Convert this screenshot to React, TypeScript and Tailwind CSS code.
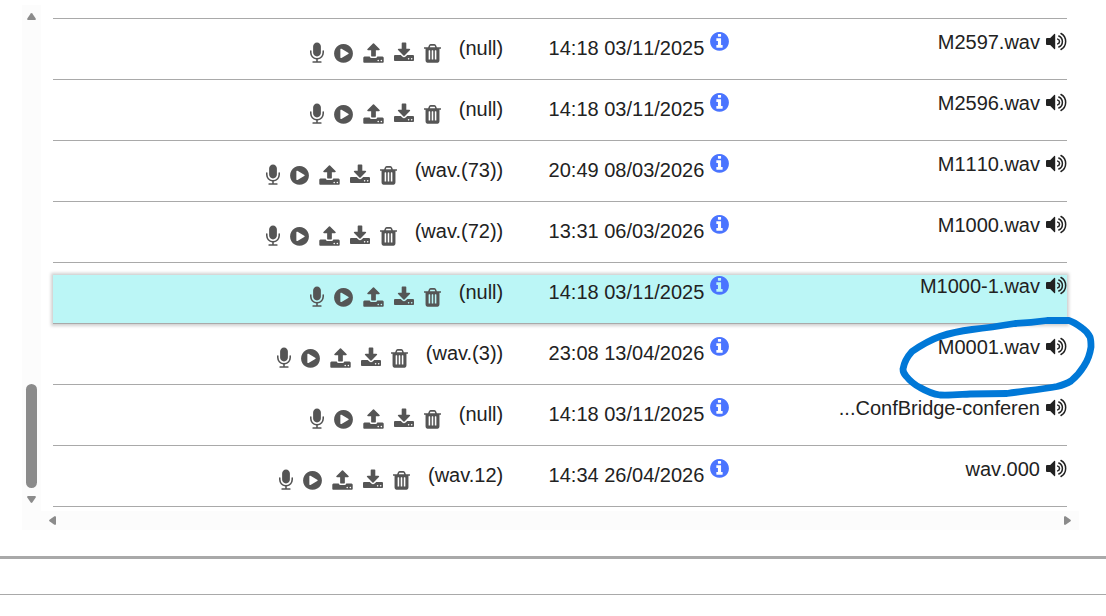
import type { ReactNode } from "react";

type IconProps = { box: string; className: string; d: string };

function Icon({ box, className, d }: IconProps) {
  return (
    <svg viewBox={box} className={className} fill="currentColor" aria-hidden="true">
      <path d={d} />
    </svg>
  );
}

const MIC =
  "M1472 704v128q0 221-147.5 384.5t-364.5 187.5v132h256q26 0 45 19t19 45-19 45-45 19h-640q-26 0-45-19t-19-45 19-45 45-19h256v-132q-217-24-364.5-187.5t-147.5-384.5v-128q0-26 19-45t45-19 45 19 19 45v128q0 185 131.5 316.5t316.5 131.5 316.5-131.5 131.5-316.5v-128q0-26 19-45t45-19 45 19 19 45zm-256-384v512q0 132-94 226t-226 94-226-94-94-226v-512q0-132 94-226t226-94 226 94 94 226z";
const PLAY =
  "M896 128q209 0 385.5 103t279.5 279.5 103 385.5-103 385.5-279.5 279.5-385.5 103-385.5-103-279.5-279.5-103-385.5 103-385.5 279.5-279.5 385.5-103zm384 823q32-18 32-55t-32-55l-544-320q-31-19-64-1-32 19-32 56v640q0 37 32 56 16 8 32 8 17 0 32-9z";
const UPLOAD =
  "M1344 1472q0-26-19-45t-45-19-45 19-19 45 19 45 45 19 45-19 19-45zm256 0q0-26-19-45t-45-19-45 19-19 45 19 45 45 19 45-19 19-45zm128-224v320q0 40-28 68t-68 28h-1472q-40 0-68-28t-28-68v-320q0-40 28-68t68-28h427q21 56 70.5 92t110.5 36h256q61 0 110.5-36t70.5-92h427q40 0 68 28t28 68zm-325-648q-17 40-59 40h-256v448q0 26-19 45t-45 19h-256q-26 0-45-19t-19-45v-448h-256q-42 0-59-40-17-39 14-69l448-448q18-19 45-19t45 19l448 448q31 30 14 69z";
const DOWNLOAD =
  "M1344 1344q0-26-19-45t-45-19-45 19-19 45 19 45 45 19 45-19 19-45zm256 0q0-26-19-45t-45-19-45 19-19 45 19 45 45 19 45-19 19-45zm128-224v320q0 40-28 68t-68 28h-1472q-40 0-68-28t-28-68v-320q0-40 28-68t68-28h465l135 136q58 56 136 56t136-56l136-136h464q40 0 68 28t28 68zm-325-569q17 41-14 70l-448 448q-18 19-45 19t-45-19l-448-448q-31-29-14-70 17-39 59-39h256v-448q0-26 19-45t45-19h256q26 0 45 19t19 45v448h256q42 0 59 39z";
const TRASH =
  "M704 1376v-704q0-14-9-23t-23-9h-64q-14 0-23 9t-9 23v704q0 14 9 23t23 9h64q14 0 23-9t9-23zm256 0v-704q0-14-9-23t-23-9h-64q-14 0-23 9t-9 23v704q0 14 9 23t23 9h64q14 0 23-9t9-23zm256 0v-704q0-14-9-23t-23-9h-64q-14 0-23 9t-9 23v704q0 14 9 23t23 9h64q14 0 23-9t9-23zm-544-992h448l-48-117q-7-9-17-11h-317q-10 2-17 11zm928 32v64q0 14-9 23t-23 9h-96v948q0 83-47 143.5t-113 60.5h-832q-66 0-113-58.5t-47-141.5v-952h-96q-14 0-23-9t-9-23v-64q0-14 9-23t23-9h309l70-167q15-37 54-63t79-26h320q40 0 79 26t54 63l70 167h309q14 0 23 9t9 23z";
const INFO =
  "M1152 1376v-160q0-14-9-23t-23-9h-96v-512q0-14-9-23t-23-9h-320q-14 0-23 9t-9 23v160q0 14 9 23t23 9h96v320h-96q-14 0-23 9t-9 23v160q0 14 9 23t23 9h448q14 0 23-9t9-23zm-128-896v-160q0-14-9-23t-23-9h-192q-14 0-23 9t-9 23v160q0 14 9 23t23 9h192q14 0 23-9t9-23zm640 416q0 209-103 385.5t-279.5 279.5-385.5 103-385.5-103-279.5-279.5-103-385.5 103-385.5 279.5-279.5 385.5-103 385.5 103 279.5 279.5 103 385.5z";

type Row = { name: string; date: string; note: string; selected?: boolean; circled?: boolean };

const rows: Row[] = [
  { name: "M2597.wav", date: "14:18 03/11/2025", note: "(null)" },
  { name: "M2596.wav", date: "14:18 03/11/2025", note: "(null)" },
  { name: "M1110.wav", date: "20:49 08/03/2026", note: "(wav.(73))" },
  { name: "M1000.wav", date: "13:31 06/03/2026", note: "(wav.(72))" },
  { name: "M1000-1.wav", date: "14:18 03/11/2025", note: "(null)", selected: true },
  { name: "M0001.wav", date: "23:08 13/04/2026", note: "(wav.(3))", circled: true },
  { name: "...ConfBridge-conferen", date: "14:18 03/11/2025", note: "(null)" },
  { name: "wav.000", date: "14:34 26/04/2026", note: "(wav.12)" },
];

const actions = [
  { label: "Record", box: "320 -32 1152 1792", d: MIC, size: "block h-[22px] w-[14px]" },
  { label: "Play", box: "128 -32 1536 1792", d: PLAY, size: "block h-[22px] w-[19px]" },
  { label: "Upload", box: "64 -32 1664 1792", d: UPLOAD, size: "block h-[22px] w-[21px]" },
  { label: "Download", box: "64 -32 1664 1792", d: DOWNLOAD, size: "block h-[22px] w-[20px]" },
  { label: "Delete", box: "192 -32 1408 1792", d: TRASH, size: "block h-[22px] w-[17px]" },
];

function Speaker() {
  return (
    <svg viewBox="0 -0.4 21 22" className="-mt-px block h-[22px] w-[21px]" aria-hidden="true">
      <path
        d="M1 7.500H4.200L8.200 3.700Q9.200 3 9.200 4.200V18Q9.200 19.200 8.200 18.500L4.200 14.700H1Q0 14.700 0 13.700V8.500Q0 7.500 1 7.500Z"
        fill="currentColor"
      />
      <g fill="none" stroke="currentColor" strokeWidth="1.5" strokeLinecap="round">
        <path d="M11.700 8.700A2.500 2.500 0 0 1 11.700 13.500" />
        <path d="M12.800 5.600A6 6 0 0 1 12.800 16.600" />
        <path d="M15 3.100A9.200 9.200 0 0 1 15 19.100" />
      </g>
    </svg>
  );
}

function PenCircle() {
  return (
    <svg
      viewBox="895 310 205 95"
      className="pointer-events-none absolute -top-[26px] -right-[33px] h-[95px] w-[205px] max-w-none"
      fill="none"
      stroke="#0078d7"
      strokeWidth="6.8"
      strokeLinecap="round"
      strokeLinejoin="round"
      aria-hidden="true"
    >
      <path d="M1069 320.500L1047 320.500C1036 322 1026 323 1015 323.500C1000 326 986 328 972 329.500C960 331 949 333.500 940 336.500C930 340 920 346 912 351.500C907 357 904 363 903 369C903 372 904 374 906 376C910 381 915 385 920 387.500C926 391 933 394 940 395C950 395.500 960 394.500 970 394L1007 393.500C1024 391 1041 389.500 1057 386.500C1063 385 1067 383.500 1071 381C1077 376 1081 371 1084 366C1088 360 1090 354 1091 347C1091 343 1091 340 1090 337C1088 333 1085 330 1082 328C1078 325 1074 322 1069 320.500Z" />
    </svg>
  );
}

function ArrowButton({ label, className, children }: { label: string; className: string; children: ReactNode }) {
  return (
    <button type="button" aria-label={label} className={className}>
      {children}
    </button>
  );
}

function Arrow({ className }: { className: string }) {
  return (
    <svg viewBox="0 0 9 7" className={className} fill="#8b8b8b" aria-hidden="true">
      <path d="M3.700 .5Q4.500-.3 5.300 .5L8.700 5.400Q9.200 7 8 7H1Q-.2 7 .3 5.400Z" />
    </svg>
  );
}

export default function App() {
  return (
    <main className="overflow-hidden bg-white pt-[5px] font-['Liberation_Sans',Arial,sans-serif] text-[20px] leading-[22px] text-[#222]">
      <div className="mr-[27px] ml-[22px]">
        <div className="flex">
          <div className="flex w-[19px] shrink-0 flex-col items-center justify-between bg-[#fcfcfc] py-2">
            <ArrowButton label="Scroll up" className="block">
              <Arrow className="h-[7px] w-[9px]" />
            </ArrowButton>
            <div className="flex flex-col items-center gap-2">
              <div className="h-[104px] w-[11px] rounded-full bg-[#8b8b8b]" />
              <ArrowButton label="Scroll down" className="block">
                <Arrow className="h-[7px] w-[9px] rotate-180" />
              </ArrowButton>
            </div>
          </div>
          <div className="min-w-0 grow pt-[13px] pr-3 pl-3">
            <table className="-mb-2 w-full table-fixed border-separate border-spacing-x-0 border-spacing-y-3 border-t border-[#a9a9a9]">
              <colgroup>
                <col className="w-[44.4%]" />
                <col className="w-[22.3%]" />
                <col />
              </colgroup>
              <tbody>
                {rows.map((row) => (
                  <tr
                    key={row.name}
                    className={row.selected ? "bg-[#bbf6f6] shadow-[0_0_3px_2px_#d0d0d0]" : ""}
                  >
                    <td className="h-[49px] border-b border-[#a9a9a9] p-0 align-top">
                      <div className="flex items-start justify-end gap-[18px]">
                        <div className="flex gap-[10px] pt-[11px] text-[#555]">
                          {actions.map((a) => (
                            <button key={a.label} type="button" aria-label={`${a.label} ${row.name}`}>
                              <Icon box={a.box} d={a.d} className={a.size} />
                            </button>
                          ))}
                        </div>
                        <span className="pt-1.5">{row.note}</span>
                      </div>
                    </td>
                    <td className="h-[49px] border-b border-[#a9a9a9] p-0 align-top">
                      <div className="flex items-start justify-end gap-1.5">
                        <span className="pt-1.5 whitespace-nowrap [font-kerning:none]">{row.date}</span>
                        <button type="button" aria-label={`Details of ${row.name}`} className="-mt-px text-[#4a74ff]">
                          <Icon box="128 -32 1536 1792" d={INFO} className="block h-[22px] w-[19px]" />
                        </button>
                      </div>
                    </td>
                    <td className="h-[49px] border-b border-[#a9a9a9] p-0 align-top">
                      <div className="relative flex items-start justify-end gap-1.5">
                        <span className="whitespace-nowrap [font-kerning:none]">{row.name}</span>
                        <Speaker />
                        {row.circled && <PenCircle />}
                      </div>
                    </td>
                  </tr>
                ))}
              </tbody>
            </table>
          </div>
        </div>
        <div className="flex h-[19px] items-center justify-between bg-[#fcfcfc] pr-[7px] pl-[26px]">
          <ArrowButton label="Scroll left" className="block">
            <Arrow className="h-[7px] w-[9px] -rotate-90" />
          </ArrowButton>
          <ArrowButton label="Scroll right" className="block">
            <Arrow className="h-[7px] w-[9px] rotate-90" />
          </ArrowButton>
        </div>
      </div>
      <hr className="mt-[26px] h-[3px] border-0 bg-[#a9a9a9]" />
      <hr className="mt-[35px] h-px border-0 bg-[#a9a9a9]" />
    </main>
  );
}
